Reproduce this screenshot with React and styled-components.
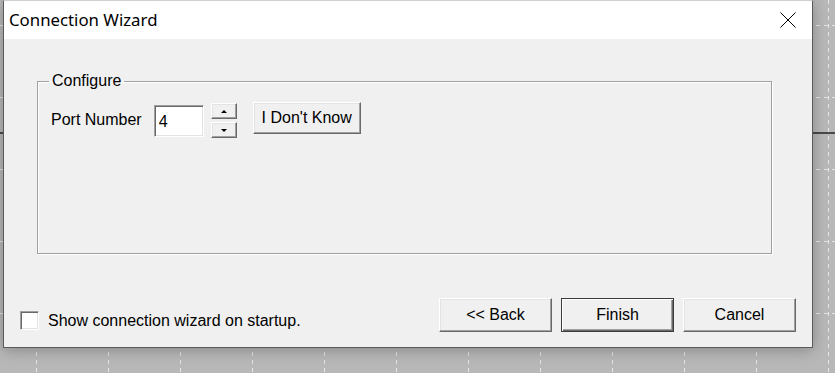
import React from 'react';
import styled, { createGlobalStyle } from 'styled-components';

const gridTile = encodeURIComponent(
  `<svg xmlns="http://www.w3.org/2000/svg" width="72" height="72">` +
    `<line x1="36.5" y1="0" x2="36.5" y2="72" stroke="#e6e6e6" stroke-dasharray="4 4"/>` +
    `<line x1="0" y1="25.5" x2="72" y2="25.5" stroke="#e6e6e6" stroke-dasharray="4 4"/>` +
    `</svg>`
);

const GlobalStyle = createGlobalStyle`
  html, body {
    margin: 0;
    padding: 0;
  }
  body {
    width: 835px;
    height: 373px;
    overflow: hidden;
    background-color: #b8b8b8;
    background-image:
      linear-gradient(to bottom, transparent 132px, #4a4a4a 132px, #4a4a4a 134px, transparent 134px),
      url("data:image/svg+xml,${gridTile}");
    background-repeat: no-repeat, repeat;
    font-family: "Liberation Sans", Arial, sans-serif;
  }
`;

const Desktop = styled.div`
  display: flex;
  padding-left: 3px;
  height: 373px;
  box-sizing: border-box;
`;

const Window = styled.div`
  display: flex;
  flex-direction: column;
  width: 810px;
  height: 348px;
  box-sizing: border-box;
  border: 1px solid #5a5a5a;
  border-top-color: #cfcfcf;
  background: #f0f0f0;
  box-shadow: 0 2px 14px rgba(0, 0, 0, 0.28);
`;

const TitleBar = styled.div`
  display: flex;
  align-items: center;
  justify-content: space-between;
  height: 38px;
  flex-shrink: 0;
  padding: 0 16px 0 5px;
  background: #fff;
`;

const Title = styled.span`
  font-family: "Noto Sans", "Open Sans", sans-serif;
  font-size: 16.8px;
  color: #000;
  margin-top: -1px;
`;

const CloseIcon = styled.svg`
  display: block;
  width: 16px;
  height: 16px;
`;

const Body = styled.div`
  flex: 1;
  display: flex;
  flex-direction: column;
`;

const GroupBox = styled.fieldset`
  margin: 33px 40px 0 33px;
  padding: 12px 0 0 13px;
  height: 182px;
  box-sizing: border-box;
  border: 1px solid #a0a0a0;
  box-shadow: inset 1px 1px #fff, 1px 1px #fff;
  min-width: 0;
`;

const Legend = styled.legend`
  padding: 0 3px;
  margin-left: -2px;
  font-size: 16px;
  color: #000;
`;

const FieldRow = styled.div`
  display: flex;
  align-items: flex-start;
`;

const Label = styled.span`
  font-size: 16px;
  color: #000;
  margin-top: 9px;
  margin-right: 12px;
`;

const NumberInput = styled.input`
  width: 50px;
  height: 32px;
  box-sizing: border-box;
  margin: 3px 0 0 0;
  padding: 2px 4px 0;
  border: 1px solid;
  border-color: #a0a0a0 #fff #fff #a0a0a0;
  box-shadow: inset 1px 1px #696969, inset -1px -1px #e3e3e3;
  background: #fff;
  font-family: "Liberation Sans", Arial, sans-serif;
  font-size: 16px;
  color: #000;
  outline: none;
`;

const Spinner = styled.div`
  display: flex;
  flex-direction: column;
  gap: 3px;
  margin: 1px 0 0 7px;
`;

const SpinButton = styled.button`
  display: flex;
  align-items: center;
  justify-content: center;
  width: 26px;
  height: 16px;
  padding: 0;
  border: 1px solid;
  border-color: #fff #696969 #696969 #fff;
  box-shadow: inset -1px -1px #a0a0a0, inset 1px 1px #e3e3e3;
  background: #f0f0f0;
`;

const Arrow = styled.span`
  width: 0;
  height: 0;
  border-left: 3px solid transparent;
  border-right: 3px solid transparent;
  ${({ $down }) =>
    $down ? 'border-top: 3px solid #000;' : 'border-bottom: 3px solid #000;'}
`;

const Button = styled.button`
  width: ${({ $w }) => $w || 113}px;
  height: ${({ $h }) => $h || 34}px;
  padding: 0;
  box-sizing: border-box;
  font-family: "Liberation Sans", Arial, sans-serif;
  font-size: 16px;
  color: #000;
  background: #f0f0f0;
  border: 1px solid;
  border-color: ${({ $default }) =>
    $default ? '#3c3c3c' : '#fff #696969 #696969 #fff'};
  box-shadow: ${({ $default }) =>
    $default
      ? 'inset 1px 1px #fff, inset -1px -1px #696969, inset -2px -2px #a0a0a0'
      : 'inset -1px -1px #a0a0a0, inset 1px 1px #e3e3e3'};
`;

const HelpButton = styled(Button)`
  margin-left: 16px;
`;

const Footer = styled.div`
  margin-top: auto;
  display: flex;
  align-items: flex-end;
  justify-content: space-between;
  padding: 0 16px 15px 16px;
`;

const CheckLabel = styled.label`
  display: flex;
  align-items: center;
  gap: 9px;
  margin-bottom: 2px;
  font-size: 16px;
  color: #000;
`;

const CheckBox = styled.span`
  width: 19px;
  height: 19px;
  box-sizing: border-box;
  border: 1px solid;
  border-color: #a0a0a0 #fff #fff #a0a0a0;
  box-shadow: inset 1px 1px #696969, inset -1px -1px #e3e3e3;
  background: #fff;
`;

const ButtonGroup = styled.div`
  display: flex;
  gap: 9px;
`;

export default function App() {
  return (
    <>
      <GlobalStyle />
      <Desktop>
        <Window>
          <TitleBar>
            <Title>Connection Wizard</Title>
            <CloseIcon viewBox="0 0 16 16">
              <path d="M0.5 0.5 L15.5 15.5 M15.5 0.5 L0.5 15.5" stroke="#000" strokeWidth="1" fill="none" />
            </CloseIcon>
          </TitleBar>
          <Body>
            <GroupBox>
              <Legend>Configure</Legend>
              <FieldRow>
                <Label>Port Number</Label>
                <NumberInput defaultValue="4" />
                <Spinner>
                  <SpinButton>
                    <Arrow />
                  </SpinButton>
                  <SpinButton>
                    <Arrow $down />
                  </SpinButton>
                </Spinner>
                <HelpButton $w={108} $h={32}>
                  I Don't Know
                </HelpButton>
              </FieldRow>
            </GroupBox>
            <Footer>
              <CheckLabel>
                <CheckBox />
                Show connection wizard on startup.
              </CheckLabel>
              <ButtonGroup>
                <Button>&lt;&lt; Back</Button>
                <Button $default>Finish</Button>
                <Button>Cancel</Button>
              </ButtonGroup>
            </Footer>
          </Body>
        </Window>
      </Desktop>
    </>
  );
}
